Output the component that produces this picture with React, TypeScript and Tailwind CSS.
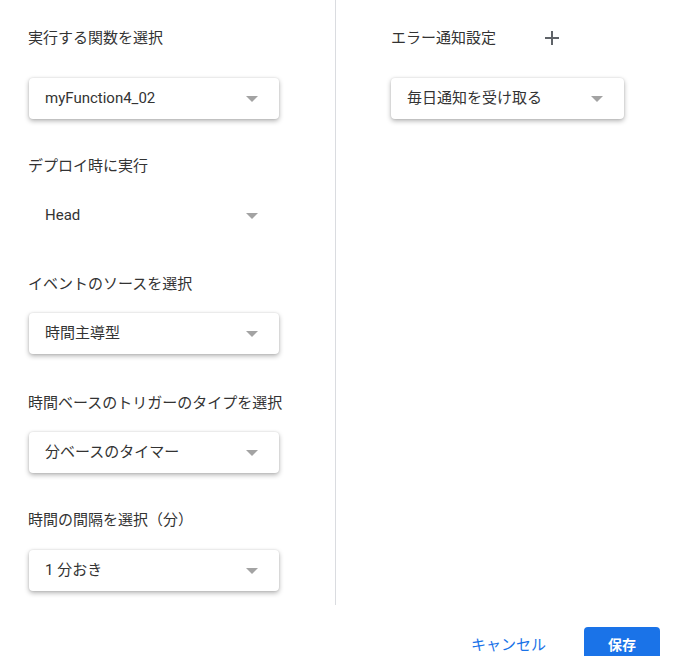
import React from 'react';

const font = { fontFamily: "Roboto, 'Noto Sans CJK JP', 'Noto Sans', sans-serif" };

function Arrow() {
  return (
    <svg width="12" height="6" viewBox="0 0 12 6" className="shrink-0">
      <path d="M0 0 L12 0 L6 6 Z" fill="#a3a3a3" />
    </svg>
  );
}

interface SelectProps {
  value: string;
  flat?: boolean;
  className?: string;
}

function SelectBox({ value, flat = false, className = '' }: SelectProps) {
  return (
    <div
      className={`flex h-[41px] items-center justify-between rounded bg-white pl-[16px] pr-[21px] text-[15px] text-[#333] ${
        flat ? '' : 'shadow-[0_2px_5px_rgba(0,0,0,0.3),0_0_2px_rgba(0,0,0,0.12)]'
      } ${className}`}
    >
      <span>{value}</span>
      <Arrow />
    </div>
  );
}

function Label({ children, className = '' }: { children: React.ReactNode; className?: string }) {
  return <div className={`h-[20px] text-[15px] leading-[20px] text-[#333] ${className}`}>{children}</div>;
}

export default function App() {
  return (
    <div className="h-[656px] w-[675px] overflow-hidden bg-white" style={font}>
      <div className="flex h-[605px]">
        {/* Left column */}
        <div className="w-[336px] shrink-0 border-r border-[#dadce0] pl-[28px]">
          <Label className="mt-[28px]">実行する関数を選択</Label>
          <SelectBox value="myFunction4_02" className="ml-[1px] mt-[30px] w-[250px]" />

          <Label className="mt-[37px]">デプロイ時に実行</Label>
          <SelectBox value="Head" flat className="ml-[1px] mt-[19px] w-[250px]" />

          <Label className="mt-[38px]">イベントのソースを選択</Label>
          <SelectBox value="時間主導型" className="ml-[1px] mt-[19px] w-[250px]" />

          <Label className="mt-[39px]">時間ベースのトリガーのタイプを選択</Label>
          <SelectBox value="分ベースのタイマー" className="ml-[1px] mt-[19px] w-[250px]" />

          <Label className="mt-[37px]">時間の間隔を選択（分）</Label>
          <SelectBox value="1 分おき" className="ml-[1px] mt-[20px] w-[250px]" />
        </div>

        {/* Right column */}
        <div className="flex-1 pl-[55px]">
          <div className="mt-[28px] flex h-[20px] items-center">
            <Label>エラー通知設定</Label>
            <svg width="14" height="14" viewBox="0 0 14 14" className="ml-[49px]">
              <path d="M7 0 V14 M0 7 H14" stroke="#5f6368" strokeWidth="2" />
            </svg>
          </div>
          <SelectBox value="毎日通知を受け取る" className="mt-[30px] w-[233px]" />
        </div>
      </div>

      {/* Footer */}
      <div className="mt-[22px] flex items-start justify-end pr-[15px]">
        <button className="mr-[38px] mt-[8px] h-[20px] text-[15px] leading-[20px] text-[#1a73e8]">
          キャンセル
        </button>
        <button className="h-[36px] w-[76px] rounded bg-[#1a73e8] text-[14px] font-bold text-white">
          保存
        </button>
      </div>
    </div>
  );
}
